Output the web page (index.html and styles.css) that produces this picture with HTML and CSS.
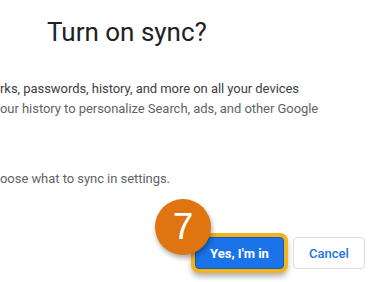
FILE: index.html
```html
<!DOCTYPE html>
<html>
<head>
<meta charset="utf-8">
<link rel="stylesheet" href="styles.css">
</head>
<body>
<div class="dialog">
  <h1 class="title">Turn on sync?</h1>
  <p class="line line-dark">rks, passwords, history, and more on all your devices</p>
  <p class="line">our history to personalize Search, ads, and other Google</p>
  <p class="line line-gap">oose what to sync in settings.</p>
  <div class="actions">
    <div class="yes-wrap">
      <span class="step">7</span>
      <button class="btn btn-primary">Yes, I'm in</button>
    </div>
    <button class="btn btn-cancel">Cancel</button>
  </div>
</div>
</body>
</html>
```

FILE: styles.css
```css
html, body {
  margin: 0;
  padding: 0;
  background: #ffffff;
}
body {
  width: 375px;
  height: 282px;
  overflow: hidden;
  font-family: Roboto, "Liberation Sans", Arial, sans-serif;
}
.dialog {
  display: flex;
  flex-direction: column;
}
.title {
  margin: 16px 0 0 47px;
  font-size: 26px;
  line-height: 32px;
  font-weight: 400;
  color: #202124;
}
.line {
  margin: 0;
  font-size: 13px;
  line-height: 20px;
  color: #5f6368;
  white-space: nowrap;
  letter-spacing: -0.05px;
}
.line-dark {
  margin-top: 31px;
  color: #3c4043;
}
.line-gap {
  margin-top: 50px;
}
.actions {
  display: flex;
  justify-content: flex-end;
  align-items: center;
  gap: 9px;
  padding-right: 10px;
  margin-top: 48px;
}
.yes-wrap {
  position: relative;
  display: flex;
}
.btn {
  height: 32px;
  border-radius: 4px;
  font-family: Roboto, "Liberation Sans", Arial, sans-serif;
  font-size: 13px;
  padding: 0;
  cursor: pointer;
}
.btn-primary {
  width: 89px;
  background: #1a73e8;
  color: #ffffff;
  font-weight: 700;
  border: 1px solid #1859b8;
  box-shadow: 0 0 0 4px #f2b41c, 0 4px 6px 3px rgba(0, 0, 0, 0.35);
}
.btn-cancel {
  width: 72px;
  background: #ffffff;
  color: #1a73e8;
  font-weight: 500;
  border: 1px solid #dadce0;
}
.step {
  position: absolute;
  left: -40px;
  top: -38px;
  width: 56px;
  height: 56px;
  border-radius: 50%;
  background: #de7511;
  color: #ffffff;
  font-family: "Liberation Sans", Arial, sans-serif;
  font-size: 37px;
  line-height: 56px;
  text-align: center;
  z-index: 2;
  box-shadow: 1px 3px 5px rgba(0, 0, 0, 0.35);
}
```
